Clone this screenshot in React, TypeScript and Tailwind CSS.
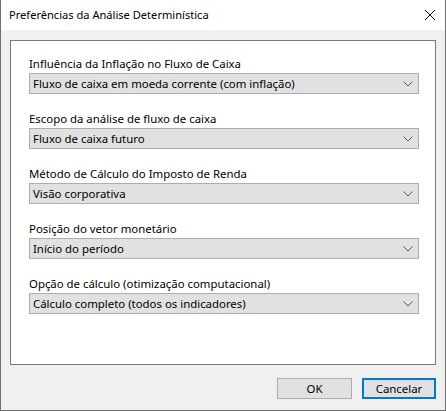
import React from 'react';

const opcoes = [
  { label: 'Influência da Inflação no Fluxo de Caixa', value: 'Fluxo de caixa em moeda corrente (com inflação)' },
  { label: 'Escopo da análise de fluxo de caixa', value: 'Fluxo de caixa futuro' },
  { label: 'Método de Cálculo do Imposto de Renda', value: 'Visão corporativa' },
  { label: 'Posição do vetor monetário', value: 'Início do período' },
  { label: 'Opção de cálculo (otimização computacional)', value: 'Cálculo completo (todos os indicadores)' },
];

const Chevron = () => (
  <svg width="10" height="6" viewBox="0 0 10 6" className="shrink-0">
    <path d="M0.5 0.5 L5 5 L9.5 0.5" fill="none" stroke="#5a5a5a" strokeWidth="1" />
  </svg>
);

const Combo: React.FC<{ label: string; value: string }> = ({ label, value }) => (
  <div className="flex flex-col">
    <div className="leading-[15px] mb-[2px] whitespace-nowrap">{label}</div>
    <div className="h-[21px] bg-[#e1e1e1] border border-[#adadad] flex items-center justify-between pl-[3px] pr-[5px]">
      <span className="whitespace-nowrap leading-none">{value}</span>
      <Chevron />
    </div>
  </div>
);

const Button: React.FC<{ label: string; focused?: boolean }> = ({ label, focused }) => (
  <div
    className={
      focused
        ? 'w-[74px] h-[21px] bg-[#e1e1e1] border-2 border-[#0078d7] flex items-center justify-center'
        : 'w-[75px] h-[21px] bg-[#e1e1e1] border border-[#adadad] flex items-center justify-center'
    }
  >
    {label}
  </div>
);

export default function App() {
  return (
    <div
      className="w-[446px] h-[411px] flex flex-col bg-[#f0f0f0] border-x border-b border-[#6f6f6f] text-[11.4px] text-black"
      style={{ fontFamily: '"Noto Sans", "Open Sans", sans-serif' }}
    >
      <div className="h-[30px] bg-white flex items-center justify-between pl-[8px] pr-[10px] shrink-0">
        <span className="text-[11.1px] whitespace-nowrap">Preferências da Análise Determinística</span>
        <svg width="10" height="10" viewBox="0 0 10 10">
          <path d="M0 0 L10 10 M10 0 L0 10" stroke="#000" strokeWidth="1" />
        </svg>
      </div>

      <div className="flex-1 flex flex-col px-[9px] pt-[10px]">
        <div className="h-[325px] bg-white border border-[#7a7a7a] pl-[18px] pr-[16px] pt-[15px] flex flex-col gap-[17px]">
          {opcoes.map((o) => (
            <Combo key={o.label} label={o.label} value={o.value} />
          ))}
        </div>

        <div className="flex justify-end gap-[10px] mt-[13px]">
          <Button label="OK" />
          <Button label="Cancelar" focused />
        </div>
      </div>
    </div>
  );
}
